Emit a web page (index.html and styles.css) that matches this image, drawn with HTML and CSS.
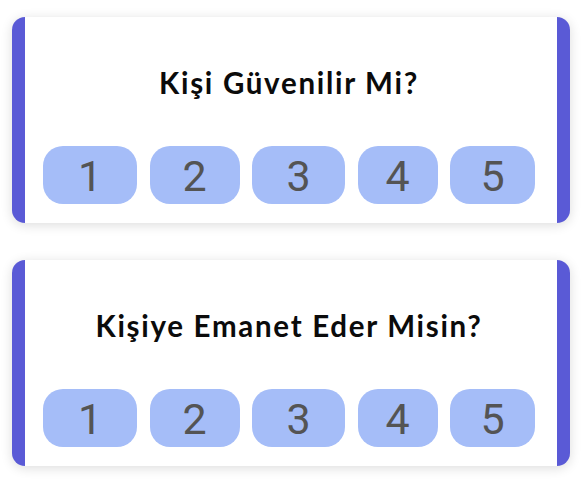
FILE: index.html
```html
<!DOCTYPE html>
<html lang="tr">
<head>
<meta charset="utf-8">
<title>Değerlendirme</title>
<link rel="stylesheet" href="styles.css">
</head>
<body>
  <main class="list">
    <section class="card">
      <h2 class="question">Kişi Güvenilir Mi?</h2>
      <div class="scale">
        <button class="opt">1</button>
        <button class="opt opt-2">2</button>
        <button class="opt opt-3">3</button>
        <button class="opt opt-4">4</button>
        <button class="opt opt-5">5</button>
      </div>
    </section>
    <section class="card">
      <h2 class="question">Kişiye Emanet Eder Misin?</h2>
      <div class="scale">
        <button class="opt">1</button>
        <button class="opt opt-2">2</button>
        <button class="opt opt-3">3</button>
        <button class="opt opt-4">4</button>
        <button class="opt opt-5">5</button>
      </div>
    </section>
  </main>
</body>
</html>
```

FILE: styles.css
```css
html, body {
  margin: 0;
  padding: 0;
  background: #ffffff;
}

body {
  font-family: "Lato", "Noto Sans", sans-serif;
}

.list {
  display: flex;
  flex-direction: column;
  gap: 37px;
  padding: 17px 12px;
}

.card {
  background: #ffffff;
  border-left: 13px solid #5a5ad6;
  border-right: 13px solid #5a5ad6;
  border-radius: 13px;
  box-shadow: 0 2px 12px rgba(0, 0, 0, 0.14);
  padding: 48px 22px 19px 18px;
  height: 206px;
  box-sizing: border-box;
  display: flex;
  flex-direction: column;
}

.question {
  margin: 0;
  font-size: 29.5px;
  line-height: 1.2;
  font-weight: 700;
  letter-spacing: 1.7px;
  color: #0b0b0b;
  text-align: center;
}

.scale {
  margin-top: auto;
  display: flex;
  justify-content: space-between;
}

.opt {
  border: 0;
  margin: 0;
  padding: 4px 0 0;
  height: 58px;
  width: 94px;
  border-radius: 20px;
  background: #a5bdf8;
  color: #545454;
  font-family: "Roboto", "Noto Sans", sans-serif;
  font-size: 43px;
  font-weight: 400;
  line-height: 1.2;
  display: flex;
  align-items: center;
  justify-content: center;
}

.opt-2 { width: 90px; }
.opt-3 { width: 93px; }
.opt-4 { width: 80px; }
.opt-5 { width: 85px; }
```
